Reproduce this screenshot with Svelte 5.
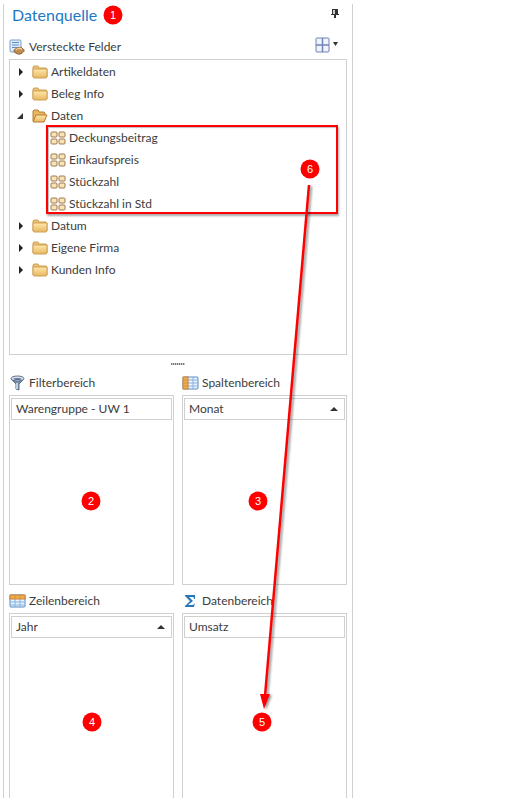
<script lang="ts">
	type Folder = { name: string; fields: string[] };
	type Area = { id: string; label: string; field: string; sorted: boolean };

	const folders: Folder[] = [
		{ name: 'Artikeldaten', fields: [] },
		{ name: 'Beleg Info', fields: [] },
		{
			name: 'Daten',
			fields: ['Deckungsbeitrag', 'Einkaufspreis', 'Stückzahl', 'Stückzahl in Std']
		},
		{ name: 'Datum', fields: [] },
		{ name: 'Eigene Firma', fields: [] },
		{ name: 'Kunden Info', fields: [] }
	];

	const areas: Area[] = [
		{ id: 'filter', label: 'Filterbereich', field: 'Warengruppe - UW 1', sorted: false },
		{ id: 'columns', label: 'Spaltenbereich', field: 'Monat', sorted: true },
		{ id: 'rows', label: 'Zeilenbereich', field: 'Jahr', sorted: true },
		{ id: 'data', label: 'Datenbereich', field: 'Umsatz', sorted: false }
	];

	// Callouts drawn on top of the panel
	const markers = [
		{ n: 1, x: 113, y: 15 },
		{ n: 2, x: 91, y: 501 },
		{ n: 3, x: 258, y: 501 },
		{ n: 4, x: 92, y: 722 },
		{ n: 5, x: 262, y: 722 },
		{ n: 6, x: 310, y: 169 }
	];

	let open = $state<Record<string, boolean>>({ Daten: true });

	function toggle(name: string) {
		open[name] = !open[name];
	}
</script>

<main class="page">
	<section class="panel" aria-labelledby="panel-title">
		<header class="title-bar">
			<h1 id="panel-title">Datenquelle</h1>
			<button type="button" class="icon-button" aria-label="Anheften">
				<svg width="8" height="9" viewBox="0 0 8 9">
					<path d="M1 0h6v5H1z" fill="#333" />
					<path d="M2 1h2v4H2z" fill="#ccc" />
					<path d="M0 5h8v1H0zM3 6h2v3H3z" fill="#333" />
				</svg>
			</button>
		</header>

		<div class="toolbar">
			<svg width="16" height="16" viewBox="0 0 16 16">
				<rect x="1" y="1" width="11" height="12" rx="1" fill="#dcebfa" stroke="#7a9fc8" />
				<path d="M3 3.5h7M3 6h7M3 8.5h5" stroke="#5d8fc6" />
				<path
					d="M5 12c0-2 2-2 3-3 2-1 5-1 6 1 2 1 1 3-1 4-2 2-5 1-6 0-1 0-2-1-2-2z"
					fill="#c08d52"
					stroke="#8a5c2e"
				/>
				<path d="M7 11c1-2 4-2 6-1" fill="none" stroke="#f2cf94" stroke-width="1.5" />
			</svg>
			<h2>Versteckte Felder</h2>
			<button type="button" class="icon-button layout" aria-label="Anordnung">
				<svg width="23" height="16" viewBox="0 0 23 16">
					<rect x="1" y="1" width="13" height="14" rx="1" fill="#f1f4fb" stroke="#7182b7" />
					<path d="M7.5 1v14M1 8h13" stroke="#7182b7" stroke-width="1.5" />
					<path d="M18 5h5l-2.5 4z" fill="#333" />
				</svg>
			</button>
		</div>

		<ul class="tree">
			{#each folders as folder, i (folder.name)}
				<li>
					<button
						type="button"
						class="row"
						aria-expanded={!!open[folder.name]}
						onclick={() => toggle(folder.name)}
					>
						<svg class="arrow" width="8" height="8" viewBox="0 0 8 8">
							{#if open[folder.name]}
								<path d="M6 1v6H0z" fill="#333" />
							{:else}
								<path d="M2 0v8l4-4z" fill="#222" />
							{/if}
						</svg>
						<svg width="16" height="14" viewBox="0 0 16 14">
							<defs>
								<linearGradient id="folder-{i}" x1="0" y1="0" x2="0" y2="1">
									<stop offset="0" stop-color="#ffe9ad" />
									<stop offset="1" stop-color="#e6b65f" />
								</linearGradient>
							</defs>
							{#if open[folder.name]}
								<path d="M1 12V2l1-1h4l1 2h5l1 1v3" fill="#e8b763" stroke="#b87c2e" />
								<path d="M1 13L4 6h11l-3 7z" fill="url(#folder-{i})" stroke="#b87c2e" />
							{:else}
								<path d="M1 12V2l1-1h4l1 2h7l1 1v8z" fill="#edc36f" stroke="#cf9f57" />
								<path d="M1 4h14v8l-1 1H2l-1-1z" fill="url(#folder-{i})" stroke="#cf9f57" />
							{/if}
						</svg>
						<span>{folder.name}</span>
					</button>

					{#if open[folder.name] && folder.fields.length}
						<ul class="group">
							{#each folder.fields as field (field)}
								<li class="row field">
									<svg width="16" height="14" viewBox="0 0 16 14">
										<g fill="#fae3b4" stroke="#9c7b52">
											<rect x="1" y="1" width="6" height="5" rx="1" />
											<rect x="9" y="1" width="6" height="5" rx="1" />
											<rect x="1" y="8" width="6" height="5" rx="1" />
											<rect x="9" y="8" width="6" height="5" rx="1" />
										</g>
									</svg>
									<span>{field}</span>
								</li>
							{/each}
						</ul>
					{/if}
				</li>
			{/each}
		</ul>

		<div class="splitter"></div>

		<div class="areas">
			{#each areas as area (area.id)}
				<section class="area" aria-labelledby="area-{area.id}">
					<header>
						<svg width="17" height="16" viewBox="0 0 17 16">
							{#if area.id === 'filter'}
								<path d="M2 4l5 5v5l3 1V9l5-5z" fill="#7890ad" stroke="#5d718b" />
								<path d="M8 8v6" stroke="#dce7f2" stroke-width="1.5" />
								<ellipse cx="8.5" cy="3.5" rx="6.5" ry="2.5" fill="#dbe5ee" stroke="#5d718b" />
								<ellipse cx="8.5" cy="4" rx="4" ry="1" fill="#60758f" />
							{:else if area.id === 'columns'}
								<rect x="1" y="2" width="15" height="12" rx="1" fill="#eaf4ff" stroke="#568bc4" />
								<path d="M11 2v12M6 5h10M6 8h10M6 11h10" stroke="#86b2e0" />
								<rect x="1" y="2" width="5" height="12" fill="#f1ad4b" stroke="#c98136" />
								<path d="M1 5h5M1 8h5M1 11h5" stroke="#d8923f" />
							{:else if area.id === 'rows'}
								<rect x="1" y="2" width="15" height="12" rx="1" fill="#eaf4ff" stroke="#568bc4" />
								<path d="M6 6v8M11 6v8M1 9h15M1 12h15" stroke="#86b2e0" />
								<rect x="1" y="2" width="15" height="4" fill="#f1ad4b" stroke="#c98136" />
								<path d="M6 2v4M11 2v4" stroke="#d8923f" />
							{:else}
								<path
									d="M3 2h10v4h-1c0-2-1-2-2-2H7l4 4-5 4h4c2 0 2-1 3-2l-1 4H3v-1l5-5-5-5z"
									fill="#2776b9"
								/>
							{/if}
						</svg>
						<h2 id="area-{area.id}">{area.label}</h2>
					</header>
					<div class="box">
						<button type="button" class="chip">
							<span>{area.field}</span>
							{#if area.sorted}
								<svg width="8" height="4" viewBox="0 0 8 4">
									<path d="M0 4l4-4 4 4z" fill="#333" />
								</svg>
							{/if}
						</button>
					</div>
				</section>
			{/each}
		</div>
	</section>

	<svg class="callouts" width="353" height="798" viewBox="0 0 353 798">
		<g class="pointer">
			<path d="M309 185L265 696" stroke="#f00" stroke-width="2.5" fill="none" />
			<path d="M260 694h10l-6 15z" fill="#f00" />
		</g>
		{#each markers as marker (marker.n)}
			<circle cx={marker.x} cy={marker.y} r="9.5" fill="#f00" />
			<text x={marker.x} y={marker.y + 4}>{marker.n}</text>
		{/each}
	</svg>
</main>

<style>
	:global(body) {
		margin: 0;
		background: #fff;
	}

	.page {
		position: relative;
		box-sizing: border-box;
		display: flex;
		min-height: 100vh;
		padding: 4px 0 0 3px;
		overflow: hidden;
		font-family: Lato, 'Open Sans', sans-serif;
		font-size: 12px;
		line-height: 22px;
		color: #3c3c3c;
	}

	.panel {
		box-sizing: border-box;
		display: flex;
		flex-direction: column;
		width: 100%;
		max-width: 350px;
		padding: 0 5px;
		border: solid #d0d0d0;
		border-width: 0 1px;
	}

	h1,
	h2 {
		margin: 0;
		font-size: 12px;
		font-weight: 400;
	}

	h1 {
		font-size: 16px;
		color: #1f77c4;
	}

	ul {
		margin: 0;
		padding: 0;
		list-style: none;
	}

	button {
		font: inherit;
		color: inherit;
		text-align: left;
		cursor: pointer;
	}

	svg {
		flex: none;
	}

	.title-bar {
		display: flex;
		align-items: center;
		justify-content: space-between;
		padding: 0 8px 0 3px;
	}

	.icon-button {
		display: flex;
		padding: 0;
		border: none;
		background: none;
	}

	.title-bar .icon-button {
		margin-bottom: 4px;
	}

	.toolbar {
		display: flex;
		align-items: center;
		gap: 4px;
		margin: 10px 0 1px;
	}

	.layout {
		margin: 0 9px 4px auto;
	}

	.tree {
		min-height: 292px;
		padding: 1px 0;
		border: 1px solid #d0d0d0;
	}

	.row {
		display: flex;
		align-items: center;
		gap: 3px;
		width: 100%;
		height: 22px;
		padding: 0 0 0 7px;
		border: none;
		background: none;
	}

	.arrow {
		margin-right: 4px;
	}

	.group {
		position: relative;
	}

	.group::after {
		content: '';
		position: absolute;
		inset: -2px 8px 1px 36px;
		border: 2px solid #f00;
		box-shadow:
			1px 2px 2px #0005,
			inset 1px 1px 1px #0004;
		pointer-events: none;
	}

	.field {
		box-sizing: border-box;
		padding-left: 40px;
	}

	.splitter {
		width: 14px;
		height: 2px;
		margin: 8px auto 7px;
		background: repeating-linear-gradient(90deg, #777 0 1px, #ccc 1px 2px);
	}

	.areas {
		display: grid;
		grid-template-columns: 1fr 1fr;
		grid-template-rows: auto 1fr;
		gap: 5px 8px;
		flex: 1;
	}

	.area {
		display: flex;
		flex-direction: column;
	}

	.area header {
		box-sizing: border-box;
		display: flex;
		align-items: center;
		gap: 3px;
		height: 23px;
		padding-bottom: 1px;
	}

	.box {
		flex: 1;
		min-height: 184px;
		padding: 2px 1px;
		border: 1px solid #d0d0d0;
	}

	.area:nth-child(n + 3) .box {
		border-bottom: none;
	}

	.chip {
		box-sizing: border-box;
		display: flex;
		align-items: center;
		justify-content: space-between;
		width: 100%;
		height: 22px;
		padding: 0 6px 0 4px;
		border: 1px solid #d0d0d0;
		background: #fff;
	}

	.callouts {
		position: absolute;
		top: 0;
		left: 0;
		pointer-events: none;
	}

	.pointer {
		filter: drop-shadow(2px 1px 1px #0006);
	}

	.callouts text {
		font-family: 'Liberation Sans', Arial, sans-serif;
		font-size: 11px;
		fill: #fff;
		text-anchor: middle;
	}
</style>
